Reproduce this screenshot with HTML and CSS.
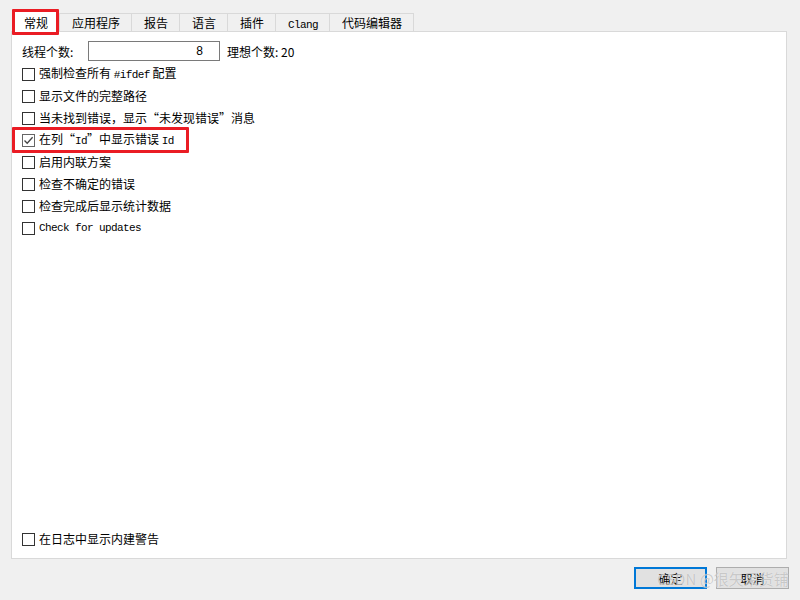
FILE: index.html
```html
<!DOCTYPE html>
<html lang="zh-CN">
<head>
  <meta charset="UTF-8" />
  <title>首选项</title>
  <link rel="stylesheet" href="styles.css">
</head>
<body>

<div class="dialog">
  <div class="tabs">
    <span class="tab active">常规</span>
    <span class="tab">应用程序</span>
    <span class="tab">报告</span>
    <span class="tab">语言</span>
    <span class="tab">插件</span>
    <span class="tab"><span class="mono">Clang</span></span>
    <span class="tab last">代码编辑器</span>
  </div>

  <div class="panel">
    <div class="threads">
      <label class="threads-label">线程个数:</label>
      <input class="num" type="text" value="8" />
      <span class="ideal">理想个数: 20</span>
    </div>

    <label class="row"><span class="box"></span><span class="text">强制检查所有 <span class="mono">#ifdef</span> 配置</span></label>
    <label class="row"><span class="box"></span><span class="text">显示文件的完整路径</span></label>
    <label class="row"><span class="box"></span><span class="text">当未找到错误，显示“未发现错误”消息</span></label>
    <label class="row"><span class="box checked"><svg width="11" height="11" viewBox="0 0 11 11"><polyline points="1.5,5.5 4.2,8.3 9.6,2.3" fill="none" stroke="#444" stroke-width="1.3"/></svg></span><span class="text">在列“<span class="mono">Id</span>”中显示错误 <span class="mono">Id</span></span></label>
    <label class="row"><span class="box"></span><span class="text">启用内联方案</span></label>
    <label class="row"><span class="box"></span><span class="text">检查不确定的错误</span></label>
    <label class="row"><span class="box"></span><span class="text">检查完成后显示统计数据</span></label>
    <label class="row"><span class="box"></span><span class="text mono">Check for updates</span></label>

    <label class="row bottom"><span class="box"></span><span class="text">在日志中显示内建警告</span></label>
  </div>

  <div class="buttons">
    <button class="btn default">确定</button>
    <button class="btn">取消</button>
  </div>
</div>

<!-- red annotation boxes and watermark lie over the dialog -->
<div class="mark mark-tab"></div>
<div class="mark mark-row"></div>
<div class="watermark">CSDN @很矢呆货铺</div>

</body>
</html>
```

FILE: styles.css
```css
html, body {
  margin: 0;
  padding: 0;
  background: #f0f0f0;
  font-family: "Noto Sans CJK SC", "Liberation Sans", sans-serif;
  font-size: 12px;
  color: #000;
  width: 800px;
  height: 600px;
  overflow: hidden;
  position: relative;
}

.mono {
  font-family: "Liberation Mono", "Noto Sans CJK SC", monospace;
  font-size: 11px;
  letter-spacing: -0.6px;
}

/* tab strip */
.tabs {
  display: flex;
  align-items: flex-end;
  padding: 11px 0 0 13px;
  height: 20px;
  position: relative;
  z-index: 2;
}

.tab {
  height: 17px;
  line-height: 17px;
  padding: 0 11px 0 12px;
  background: #f0f0f0;
  border: 1px solid #d9d9d9;
  border-right: none;
  border-bottom: none;
  white-space: nowrap;
}

.tab.last {
  border-right: 1px solid #d9d9d9;
}

.tab.active {
  background: #fff;
  height: 20px;
  line-height: 21px;
  padding: 0 11px 0 10px;
  margin-bottom: -1px;
}

/* page */
.panel {
  margin-left: 11px;
  width: 774px;
  height: 526px;
  background: #fff;
  border: 1px solid #d9d9d9;
  display: flex;
  flex-direction: column;
}

.threads {
  display: flex;
  align-items: center;
  height: 20px;
  margin: 9px 0 2px 10px;
}

.threads-label {
  width: 66px;
}

.num {
  height: 18px;
  box-sizing: content-box;
  border: 1px solid #7a7a7a;
  padding: 0 16px 0 0;
  margin: 0;
  width: 114px;
  text-align: right;
  font-family: "Liberation Sans", sans-serif;
  font-size: 12px;
  outline: none;
}

.ideal {
  margin-left: 7px;
}

.row {
  display: flex;
  align-items: center;
  height: 22px;
  margin-left: 10px;
  white-space: nowrap;
}

.row .text {
  line-height: 22px;
}

.row.bottom {
  margin-top: auto;
  margin-bottom: 8px;
}

.box {
  width: 11px;
  height: 11px;
  border: 1px solid #333;
  background: #fff;
  margin-right: 4px;
  display: flex;
  align-items: center;
  justify-content: center;
  flex-shrink: 0;
}

.box.checked {
  border-color: #666;
}

/* buttons */
.buttons {
  display: flex;
  justify-content: flex-end;
  gap: 9px;
  margin: 8px 11px 0 0;
}

.btn {
  height: 22px;
  width: 73px;
  background: #e1e1e1;
  border: 1px solid #adadad;
  font-family: "Noto Sans CJK SC", sans-serif;
  font-size: 12px;
  color: #000;
  padding: 0;
}

.btn.default {
  border: 2px solid #0078d7;
}

/* annotations */
.mark {
  position: absolute;
  border: 3px solid #ea1c24;
  border-radius: 1px;
  box-sizing: border-box;
  z-index: 5;
}

.mark-tab {
  left: 12px;
  top: 9px;
  width: 47px;
  height: 26px;
}

.mark-row {
  left: 12px;
  top: 127px;
  width: 177px;
  height: 26px;
}

.watermark {
  position: absolute;
  left: 657px;
  top: 568px;
  font-family: "Noto Sans CJK SC", sans-serif;
  font-size: 15px;
  color: rgba(170, 170, 170, 0.6);
  text-shadow: 0 0 1px rgba(255, 255, 255, 0.8);
  white-space: nowrap;
  pointer-events: none;
  z-index: 6;
}
```
